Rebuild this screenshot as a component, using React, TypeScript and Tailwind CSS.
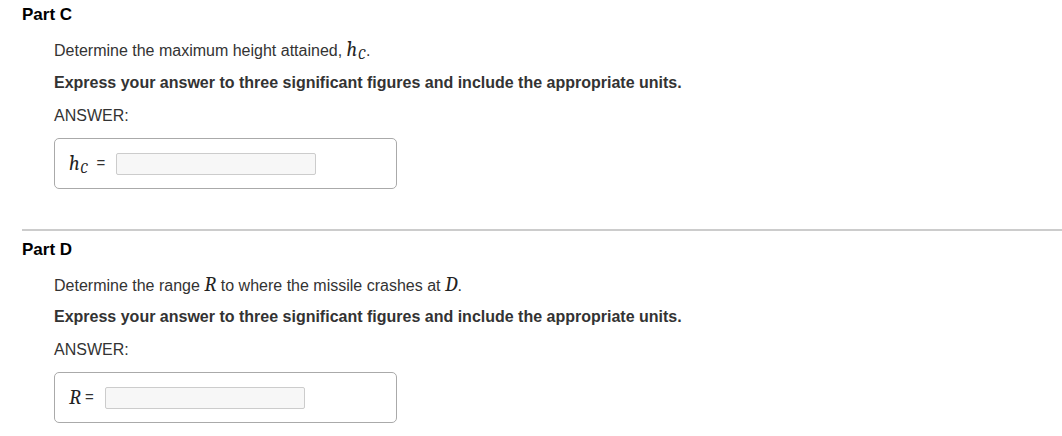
const sans = { fontFamily: '"Liberation Sans", Arial, sans-serif' };

const H = () => (
  <span className="font-serif italic text-[20px] text-[#222]">
    h<span className="text-[14px] relative top-[3px] ml-[1px] mr-[1px]">C</span>
  </span>
);

const Rv = () => (
  <span className="font-serif italic text-[21px] text-[#222]">R</span>
);

const Dv = () => (
  <span className="font-serif italic text-[21px] text-[#222]">D</span>
);

type PartProps = {
  title: string;
  question: React.ReactNode;
  label: React.ReactNode;
  qTop: string;
};

const Part = ({ title, question, label, qTop }: PartProps) => (
  <div>
    <div className="text-[17px] leading-5 font-bold text-black">{title}</div>
    <div className="ml-8 text-[#333] text-[16px]">
      <p className={`${qTop} leading-5 h-5 whitespace-pre`}>{question}</p>
      <p className="mt-[13px] leading-5 font-bold">
        Express your answer to three significant figures and include the appropriate units.
      </p>
      <p className="mt-[13px] leading-5">ANSWER:</p>
      <div className="mt-3 w-[343px] h-[51px] border border-[#aaa] rounded-[5px] flex items-center pl-[14px]">
        <div className="flex items-center">{label}</div>
        <div className="ml-[11px] w-[200px] h-[22px] bg-[#f7f7f7] border border-[#ccc] rounded-[2px]" />
      </div>
    </div>
  </div>
);

export default function App() {
  return (
    <div className="w-[1062px] h-[436px] bg-white overflow-hidden pt-[5px]" style={sans}>
      <div className="pl-[22px]">
        <Part
          title="Part C"
          qTop="mt-[15px]"
          question={
            <>
              Determine the maximum height attained, <H />.
            </>
          }
          label={
            <>
              <H />
              <span className="text-[15px] text-[#333] ml-[8px]">=</span>
            </>
          }
        />
        <div className="mt-10 h-[2px] bg-[#cccccc]" />
        <div className="mt-[9px]">
          <Part
            title="Part D"
            qTop="mt-[14px]"
            question={
              <>
                Determine the range <Rv /> to where the missile crashes at <Dv />.
              </>
            }
            label={
              <>
                <Rv />
                <span className="text-[15px] text-[#333] ml-[4px]">=</span>
              </>
            }
          />
        </div>
      </div>
    </div>
  );
}
